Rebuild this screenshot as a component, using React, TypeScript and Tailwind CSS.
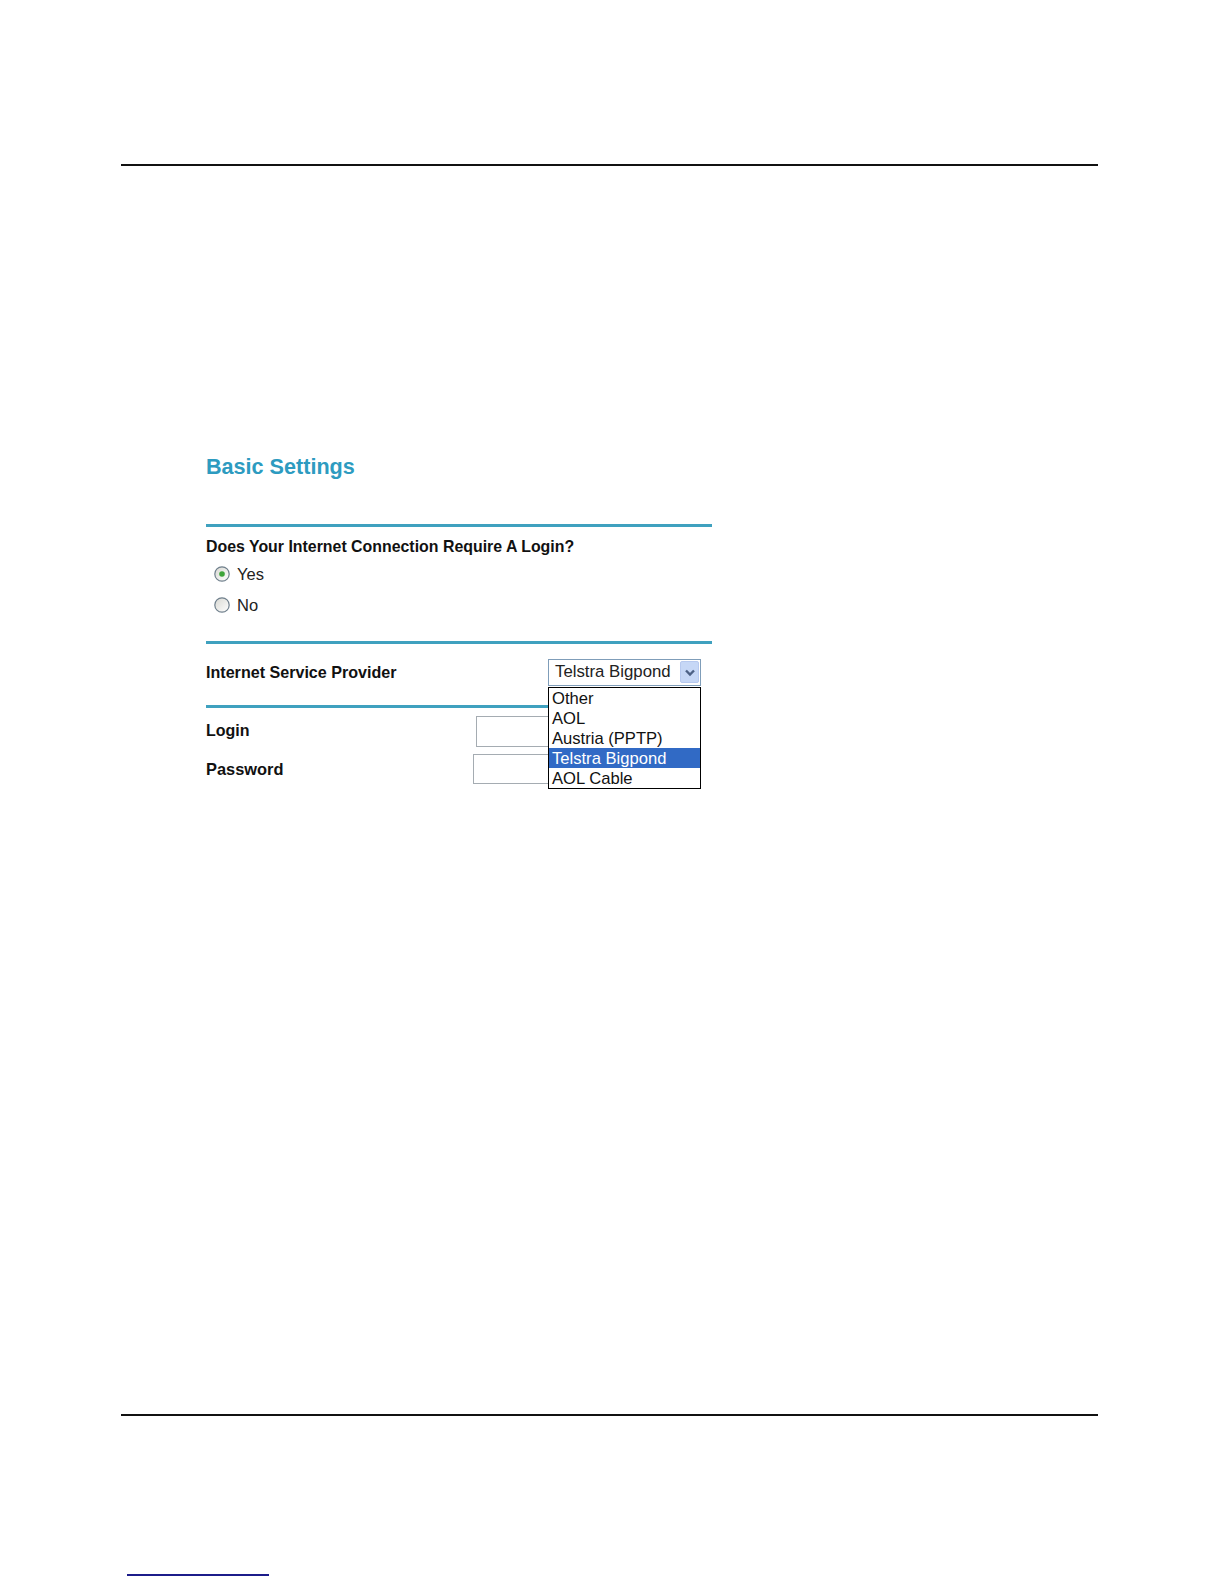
import React from "react";

const providers = ["Other", "AOL", "Austria (PPTP)", "Telstra Bigpond", "AOL Cable"];

const Radio = ({ checked }: { checked?: boolean }) => (
  <svg width="16" height="16" viewBox="0 0 16 16" className="shrink-0">
    <defs>
      <linearGradient id={checked ? "rg1" : "rg2"} x1="0" y1="0" x2="1" y2="1">
        <stop offset="0" stopColor="#d8d8d2" />
        <stop offset="1" stopColor="#ffffff" />
      </linearGradient>
    </defs>
    <circle cx="8" cy="8" r="7.2" fill={`url(#${checked ? "rg1" : "rg2"})`} stroke="#6f7f8c" strokeWidth="1.2" />
    {checked && <circle cx="8" cy="8" r="2.8" fill="#3ea43a" />}
  </svg>
);

const Teal = ({ w = "w-full", mt }: { w?: string; mt: string }) => (
  <div className={`${mt} ${w} h-[3px] bg-[#3fa1bf]`} />
);

export default function App() {
  return (
    <div className="relative w-[1224px] h-[1584px] bg-white font-['Liberation_Sans',Arial,sans-serif] text-[#111]">
      <div className="pt-[164px]">
        <div className="ml-[121px] w-[977px] h-[2px] bg-[#111]" />
      </div>

      <section className="ml-[206px] w-[506px] mt-[290px]">
        <h1 className="text-[21.6px] leading-[21px] font-bold text-[#2d9bc0]">Basic Settings</h1>

        <Teal mt="mt-[47px]" />

        <p className="mt-[11.7px] text-[15.9px] leading-[15.7px] font-bold">
          Does Your Internet Connection Require A Login?
        </p>

        <label className="mt-[11.6px] ml-[8px] flex h-[16.5px] items-center gap-[7px] text-[16.5px] leading-[16.5px] text-[#222]">
          <Radio checked />
          Yes
        </label>
        <label className="mt-[14.5px] ml-[8px] flex h-[16.5px] items-center gap-[7px] text-[16.5px] leading-[16.5px] text-[#222]">
          <Radio />
          No
        </label>

        <Teal mt="mt-[27.5px]" />

        <div className="mt-[15px] flex h-[27px] items-center">
          <span className="flex-1 text-[16.1px] leading-[16px] font-bold">Internet Service Provider</span>
          <div className="relative mr-[11px] w-[153px]">
            <div className="flex h-[27px] items-center border border-[#7f9db9] bg-white">
              <span className="flex-1 pl-[6px] text-[16.8px] leading-[16.5px] text-[#222]">Telstra Bigpond</span>
              <div className="mr-[1px] flex h-[22px] w-[19px] items-center justify-center rounded-[2px] border border-[#b7c9ef] bg-[#c6d7f6]">
                <svg width="12" height="9" viewBox="0 0 12 9">
                  <path d="M2 2.5 L6 6.5 L10 2.5" fill="none" stroke="#4d6185" strokeWidth="2.4" />
                </svg>
              </div>
            </div>
            <ul className="absolute left-0 top-[28px] z-10 w-[153px] border border-black bg-white">
              {providers.map((p) => (
                <li
                  key={p}
                  className={`h-[20px] pl-[3px] pt-[1px] text-[16.6px] leading-[20px] ${
                    p === "Telstra Bigpond" ? "bg-[#316ac5] text-white" : "text-[#111]"
                  }`}
                >
                  {p}
                </li>
              ))}
            </ul>
          </div>
        </div>

        <Teal mt="mt-[19px]" w="w-[342px]" />

        <div className="mt-[8px] flex h-[31px] items-center">
          <span className="w-[270px] text-[16px] leading-[16px] font-bold">Login</span>
          <input type="text" className="h-[31px] w-[150px] border border-[#a5acb2] bg-white outline-none" />
        </div>
        <div className="mt-[7px] flex h-[30px] items-center">
          <span className="w-[267px] text-[16.4px] leading-[16px] font-bold">Password</span>
          <input type="password" className="h-[30px] w-[153px] border border-[#a5acb2] bg-white outline-none" />
        </div>
      </section>

      <div className="mt-[630px] ml-[121px] w-[977px] h-[2px] bg-[#111]" />
      <div className="mt-[158px] ml-[127px] w-[142px] h-[2px] bg-[#1c1c8a]" />
    </div>
  );
}
